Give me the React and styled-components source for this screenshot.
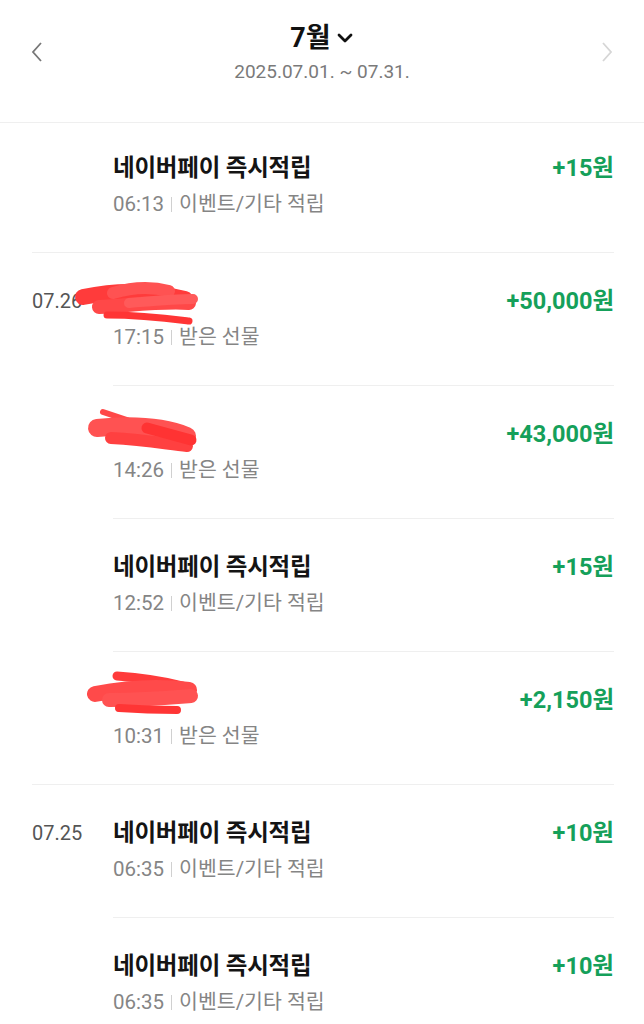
import React from 'react'
import styled, { createGlobalStyle } from 'styled-components'

const GlobalStyle = createGlobalStyle`
  body {
    margin: 0;
    background: #fff;
    font-family: Roboto, "Noto Sans CJK KR", sans-serif;
  }
`

const groups = [
  {
    date: '',
    first: true,
    items: [
      { title: '네이버페이 즉시적립', time: '06:13', kind: '이벤트/기타 적립', amount: '+15원' },
    ],
  },
  {
    date: '07.26',
    items: [
      { scribble: 'a', time: '17:15', kind: '받은 선물', amount: '+50,000원' },
      { scribble: 'b', time: '14:26', kind: '받은 선물', amount: '+43,000원' },
      { title: '네이버페이 즉시적립', time: '12:52', kind: '이벤트/기타 적립', amount: '+15원' },
      { scribble: 'c', time: '10:31', kind: '받은 선물', amount: '+2,150원' },
    ],
  },
  {
    date: '07.25',
    items: [
      { title: '네이버페이 즉시적립', time: '06:35', kind: '이벤트/기타 적립', amount: '+10원' },
      { title: '네이버페이 즉시적립', time: '06:35', kind: '이벤트/기타 적립', amount: '+10원' },
    ],
  },
]

// red marker strokes that hide the sender names
const scribbles = {
  a: (
    <>
      <path d="M10 18 C40 12 70 10 112 20" stroke="#ff3b3b" strokeWidth="16" />
      <path d="M40 14 C60 8 80 8 96 12" stroke="#ff5252" strokeWidth="12" />
      <path d="M26 28 C60 26 90 22 116 24" stroke="#ff4848" strokeWidth="14" />
      <path d="M34 36 C70 36 100 40 116 42" stroke="#ff3535" strokeWidth="7" />
      <path d="M56 24 C80 22 100 20 120 20" stroke="#ff5a5a" strokeWidth="10" />
    </>
  ),
  b: (
    <>
      <path d="M16 8 L40 16" stroke="#ff4848" strokeWidth="6" />
      <path d="M10 24 C50 20 80 24 100 32" stroke="#ff5252" strokeWidth="18" />
      <path d="M24 34 C60 36 80 40 100 42" stroke="#ff4040" strokeWidth="12" />
      <path d="M60 24 L104 36" stroke="#ff3333" strokeWidth="11" />
    </>
  ),
  c: (
    <>
      <path d="M30 10 C60 12 80 16 96 20" stroke="#ff3b3b" strokeWidth="9" />
      <path d="M8 28 C40 22 70 20 102 24" stroke="#ff4a4a" strokeWidth="16" />
      <path d="M22 34 C60 34 80 32 104 30" stroke="#ff5252" strokeWidth="14" />
      <path d="M32 42 C60 44 80 44 90 44" stroke="#ff3535" strokeWidth="8" />
    </>
  ),
}

const Chevron = ({ dir, color }) => (
  <svg width="14" height="22" viewBox="0 0 14 22" fill="none" stroke={color} strokeWidth="1.8">
    {dir === 'left' ? <path d="M11 2 L3 11 L11 20" /> : <path d="M3 2 L11 11 L3 20" />}
  </svg>
)

const App = () => {
  return (
    <Page>
      <GlobalStyle />
      <Header>
        <ArrowButton>
          <Chevron dir="left" color="#777" />
        </ArrowButton>
        <HeaderCenter>
          <MonthTitle>
            7월
            <svg width="18" height="12" viewBox="0 0 18 12" fill="none" stroke="#111" strokeWidth="2.8" strokeLinecap="round" strokeLinejoin="round">
              <path d="M3 3 L9 9 L15 3" />
            </svg>
          </MonthTitle>
          <Period>2025.07.01. ~ 07.31.</Period>
        </HeaderCenter>
        <ArrowButton>
          <Chevron dir="right" color="#d6d6d6" />
        </ArrowButton>
      </Header>

      <List>
        {groups.map((group, gi) => (
          <Group key={gi}>
            <DateLabel $first={group.first}>{group.date}</DateLabel>
            <Items>
              {group.items.map((item, ii) => (
                <Item key={ii} $top={group.first && ii === 0}>
                  <ItemMain>
                    <Title>
                      {item.title}
                      {item.scribble && (
                        <Scribble viewBox="0 0 130 50" fill="none" strokeLinecap="round" strokeLinejoin="round" $v={item.scribble}>
                          {scribbles[item.scribble]}
                        </Scribble>
                      )}
                    </Title>
                    <Meta>
                      <span>{item.time}</span>
                      <Bar />
                      <span>{item.kind}</span>
                    </Meta>
                  </ItemMain>
                  <Amount>{item.amount}</Amount>
                </Item>
              ))}
            </Items>
          </Group>
        ))}
      </List>
    </Page>
  )
}

const Page = styled.div`
  width: 644px;
  height: 1024px;
  overflow: hidden;
  background: #fff;
`

const Header = styled.div`
  height: 122px;
  border-bottom: 1px solid #efefef;
  display: flex;
  align-items: flex-start;
  justify-content: space-between;
  padding: 0 30px;
`

const ArrowButton = styled.div`
  width: 14px;
  height: 22px;
  margin-top: 41px;
  display: flex;
`

const HeaderCenter = styled.div`
  display: flex;
  flex-direction: column;
  align-items: center;
  padding-top: 19px;
`

const MonthTitle = styled.div`
  display: flex;
  align-items: center;
  gap: 5px;
  font-size: 27px;
  font-weight: 700;
  color: #111;
  line-height: 38px;
`

const Period = styled.div`
  font-size: 19px;
  color: #7a7a7a;
  line-height: 30px;
`

const List = styled.div`
  display: flex;
  flex-direction: column;
`

const Group = styled.div`
  margin: 0 30px 0 32px;
  border-bottom: 1px solid #efefef;
  display: grid;
  grid-template-columns: 81px 1fr;
`

const DateLabel = styled.div`
  padding-top: ${p => (p.$first ? 31 : 34)}px;
  font-size: 20px;
  line-height: 28px;
  color: #555;
`

const Items = styled.div`
  display: flex;
  flex-direction: column;
`

const Item = styled.div`
  display: flex;
  justify-content: space-between;
  align-items: flex-start;
  padding: ${p => (p.$top ? 31 : 34)}px 0 36px;
  border-bottom: 1px solid #efefef;

  &:last-child {
    border-bottom: none;
  }
`

const ItemMain = styled.div`
  display: flex;
  flex-direction: column;
  gap: 10px;
`

const Title = styled.div`
  position: relative;
  height: 28px;
  font-size: 23.5px;
  font-weight: 700;
  line-height: 28px;
  color: #141414;
  letter-spacing: -0.2px;
`

const Scribble = styled.svg`
  position: absolute;
  width: 130px;
  height: 50px;
  left: ${p => (p.$v === 'a' ? -40 : -26)}px;
  top: ${p => (p.$v === 'a' ? -8 : p.$v === 'b' ? -16 : -20)}px;
`

const Meta = styled.div`
  display: flex;
  align-items: center;
  gap: 7px;
  font-size: 20.5px;
  line-height: 24px;
  color: #858585;
`

const Bar = styled.i`
  width: 1px;
  height: 15px;
  background: #d0d0d0;
`

const Amount = styled.div`
  font-size: 23.5px;
  font-weight: 700;
  line-height: 28px;
  color: #15a05a;
`

export default App
